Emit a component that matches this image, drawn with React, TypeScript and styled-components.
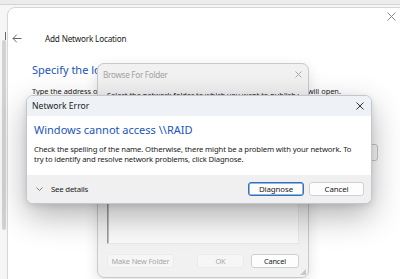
import React from 'react';
import styled, { createGlobalStyle } from 'styled-components';

const Global = createGlobalStyle`
  html, body { margin: 0; padding: 0; background: #f0f0f0; }
  body { font-family: "Noto Sans", "Open Sans", sans-serif; color: #1b1b1b; }
  * { box-sizing: border-box; }
`;

const Desktop = styled.div`
  position: relative;
  width: 400px;
  height: 279px;
  overflow: hidden;
  background: #f3f3f3;
`;

const BackWindow = styled.div`
  position: absolute;
  left: -10px;
  top: -10px;
  width: 440px;
  height: 300px;
  background: #f6f6f6;
`;

const BackTopBar = styled.div`
  height: 15px;
  background: #ececec;
  border-bottom: 1px solid #d4d4d4;
`;

const BackScroll = styled.div`
  position: absolute;
  left: 12px;
  top: 50px;
  width: 4px;
  height: 190px;
  border-radius: 2px;
  background: #d2d2d2;
`;

const BackMark = styled.div`
  position: absolute;
  left: 15px;
  top: 42px;
  width: 1px;
  height: 8px;
  background: #666;
`;

const MainWindow = styled.div`
  position: absolute;
  left: 7px;
  top: 7px;
  width: 410px;
  height: 290px;
  background: #ffffff;
  border: 1px solid #d6d6d6;
  border-radius: 8px;
  display: flex;
  flex-direction: column;
`;

const CloseRow = styled.div`
  display: flex;
  justify-content: flex-end;
  padding: 4px 20px 0 0;
  height: 16px;
`;

const HeaderRow = styled.div`
  display: flex;
  align-items: center;
  gap: 23px;
  padding-left: 4px;
  margin-top: 6px;
  height: 16px;
`;

const HeaderTitle = styled.span`
  font-size: 8.2px;
  letter-spacing: -0.2px;
  color: #1b1b1b;
`;

const WizardBody = styled.div`
  display: flex;
  flex-direction: column;
  padding-left: 24px;
  padding-top: 16px;
`;

const BlueHeading = styled.div`
  font-size: 11px;
  line-height: 16px;
  color: #2154bd;
  white-space: nowrap;
`;

const WizardText = styled.div`
  margin-top: 8px;
  font-size: 7.4px;
  line-height: 11px;
  color: #1b1b1b;
  white-space: nowrap;
`;

const WizardInput = styled.div`
  margin-top: 47px;
  width: 346px;
  height: 17px;
  border: 1px solid #c8c8c8;
  border-radius: 3px;
  background: #fbfbfb;
`;

const BrowseDialog = styled.div`
  position: absolute;
  left: 97px;
  top: 63px;
  width: 212px;
  height: 215px;
  background: #f1f1f1;
  border: 1px solid #c9c9c9;
  border-radius: 7px;
  display: flex;
  flex-direction: column;
  box-shadow: 0 4px 14px rgba(0, 0, 0, 0.12);
`;

const BrowseTitleBar = styled.div`
  display: flex;
  align-items: center;
  justify-content: space-between;
  height: 20px;
  padding: 0 6px 0 5px;
`;

const BrowseTitle = styled.span`
  font-size: 8.2px;
  letter-spacing: -0.3px;
  color: #a3a3a3;
`;

const BrowseBody = styled.div`
  flex: 1;
  display: flex;
  flex-direction: column;
  padding: 0 9px 0 9px;
`;

const BrowseText = styled.div`
  font-size: 7.4px;
  line-height: 11px;
  margin-top: 6px;
  white-space: nowrap;
  overflow: hidden;
  color: #1b1b1b;
`;

const TreeBox = styled.div`
  margin-top: 6px;
  height: 137px;
  background: #fafafa;
  border: 1px solid #9a9a9a;
  border-right-color: #e8e8e8;
  border-bottom-color: #e8e8e8;
  box-shadow: inset 1px 1px 0 #bdbdbd;
`;

const BrowseButtons = styled.div`
  display: flex;
  align-items: center;
  justify-content: space-between;
  margin-top: 10px;
`;

const ButtonPair = styled.div`
  display: flex;
  gap: 7px;
`;

const SmallButton = styled.div<{ $disabled?: boolean; $w: number }>`
  flex: none;
  width: ${p => p.$w}px;
  height: 14px;
  display: flex;
  align-items: center;
  justify-content: center;
  font-size: 7.4px;
  letter-spacing: -0.15px;
  border-radius: 3px;
  color: ${p => (p.$disabled ? '#a6a6a6' : '#1b1b1b')};
  background: ${p => (p.$disabled ? '#f6f6f6' : '#fdfdfd')};
  border: 1px solid ${p => (p.$disabled ? '#ebebeb' : '#cfcfcf')};
`;

const Grip = styled.div`
  position: absolute;
  right: 2px;
  bottom: 2px;
  width: 6px;
  height: 6px;
  background-image: radial-gradient(circle, #9a9a9a 0.6px, transparent 0.8px);
  background-size: 2px 2px;
  clip-path: polygon(100% 0, 100% 100%, 0 100%);
`;

const ErrorDialog = styled.div`
  position: absolute;
  left: 26px;
  top: 95px;
  width: 346px;
  height: 109px;
  background: #ffffff;
  border: 1px solid #c2c7cf;
  border-radius: 7px;
  overflow: hidden;
  display: flex;
  flex-direction: column;
  box-shadow: 0 12px 32px rgba(0, 0, 0, 0.3), 0 2px 6px rgba(0, 0, 0, 0.1);
`;

const ErrorTitleBar = styled.div`
  height: 20px;
  background: #eef1f5;
  display: flex;
  align-items: center;
  justify-content: space-between;
  padding: 0 7px 0 5px;
`;

const ErrorTitle = styled.span`
  font-size: 8.6px;
  color: #1b1b1b;
`;

const ErrorBody = styled.div`
  flex: 1;
  padding: 6px 0 0 7px;
  display: flex;
  flex-direction: column;
`;

const ErrorText = styled.div`
  margin-top: 7px;
  font-size: 7.7px;
  letter-spacing: -0.14px;
  line-height: 9.6px;
  color: #1b1b1b;
  width: 327px;
`;

const ErrorFooter = styled.div`
  height: 28px;
  background: #f0f0f0;
  display: grid;
  grid-template-columns: 7px auto 1fr 56px 55px;
  column-gap: 5px;
  align-items: center;
  padding: 0 7px 0 9px;
`;

const Details = styled.span`
  font-size: 7.8px;
  letter-spacing: -0.2px;
  color: #1b1b1b;
  margin-left: 3px;
`;

const FooterButton = styled.div<{ $primary?: boolean }>`
  height: 14px;
  display: flex;
  align-items: center;
  justify-content: center;
  font-size: 7.9px;
  letter-spacing: -0.1px;
  color: #1b1b1b;
  background: #fdfdfd;
  border-radius: 3px;
  border: 1px solid ${p => (p.$primary ? '#2f6fc4' : '#d0d0d0')};
  box-shadow: ${p => (p.$primary ? 'inset 0 0 0 0.5px #2f6fc4' : 'none')};
`;

const Icon = styled.svg<{ $c: string }>`
  display: block;
  flex: none;
  stroke: ${p => p.$c};
  fill: none;
`;

const XIcon = ({ size, color, w = 1 }: { size: number; color: string; w?: number }) => (
  <Icon $c={color} width={size} height={size} viewBox={`0 0 ${size} ${size}`} strokeWidth={w}>
    <path d={`M0.5 0.5 L${size - 0.5} ${size - 0.5} M${size - 0.5} 0.5 L0.5 ${size - 0.5}`} />
  </Icon>
);

export default function App() {
  return (
    <Desktop>
      <Global />
      <BackWindow>
        <BackTopBar />
        <BackMark />
        <BackScroll />
      </BackWindow>

      <MainWindow>
        <CloseRow>
          <XIcon size={9} color="#8a8a8a" />
        </CloseRow>
        <HeaderRow>
          <Icon $c="#555" width={10} height={9} viewBox="0 0 10 9" strokeWidth={0.9}>
            <path d="M9.5 4.5 H1 M4.8 0.7 L1 4.5 L4.8 8.3" />
          </Icon>
          <HeaderTitle>Add Network Location</HeaderTitle>
        </HeaderRow>
        <WizardBody>
          <BlueHeading>Specify the location of your website</BlueHeading>
          <WizardText>
            Type the address of the website, FTP site, or network location that this shortcut will open.
          </WizardText>
          <WizardInput />
        </WizardBody>
      </MainWindow>

      <BrowseDialog>
        <BrowseTitleBar>
          <BrowseTitle>Browse For Folder</BrowseTitle>
          <XIcon size={7} color="#a8a8a8" />
        </BrowseTitleBar>
        <BrowseBody>
          <BrowseText>Select the network folder to which you want to publish your files.</BrowseText>
          <TreeBox />
          <BrowseButtons>
            <SmallButton $disabled $w={67}>Make New Folder</SmallButton>
            <ButtonPair>
              <SmallButton $disabled $w={47}>OK</SmallButton>
              <SmallButton $w={48}>Cancel</SmallButton>
            </ButtonPair>
          </BrowseButtons>
        </BrowseBody>
        <Grip />
      </BrowseDialog>

      <ErrorDialog>
        <ErrorTitleBar>
          <ErrorTitle>Network Error</ErrorTitle>
          <XIcon size={8} color="#333" />
        </ErrorTitleBar>
        <ErrorBody>
          <BlueHeading>Windows cannot access \\RAID</BlueHeading>
          <ErrorText>
            Check the spelling of the name. Otherwise, there might be a problem with your network. To
            try to identify and resolve network problems, click Diagnose.
          </ErrorText>
        </ErrorBody>
        <ErrorFooter>
          <Icon $c="#666" width={7} height={4} viewBox="0 0 7 4" strokeWidth={0.8}>
            <path d="M0.5 0.5 L3.5 3.5 L6.5 0.5" />
          </Icon>
          <Details>See details</Details>
          <span />
          <FooterButton $primary>Diagnose</FooterButton>
          <FooterButton>Cancel</FooterButton>
        </ErrorFooter>
      </ErrorDialog>
    </Desktop>
  );
}
